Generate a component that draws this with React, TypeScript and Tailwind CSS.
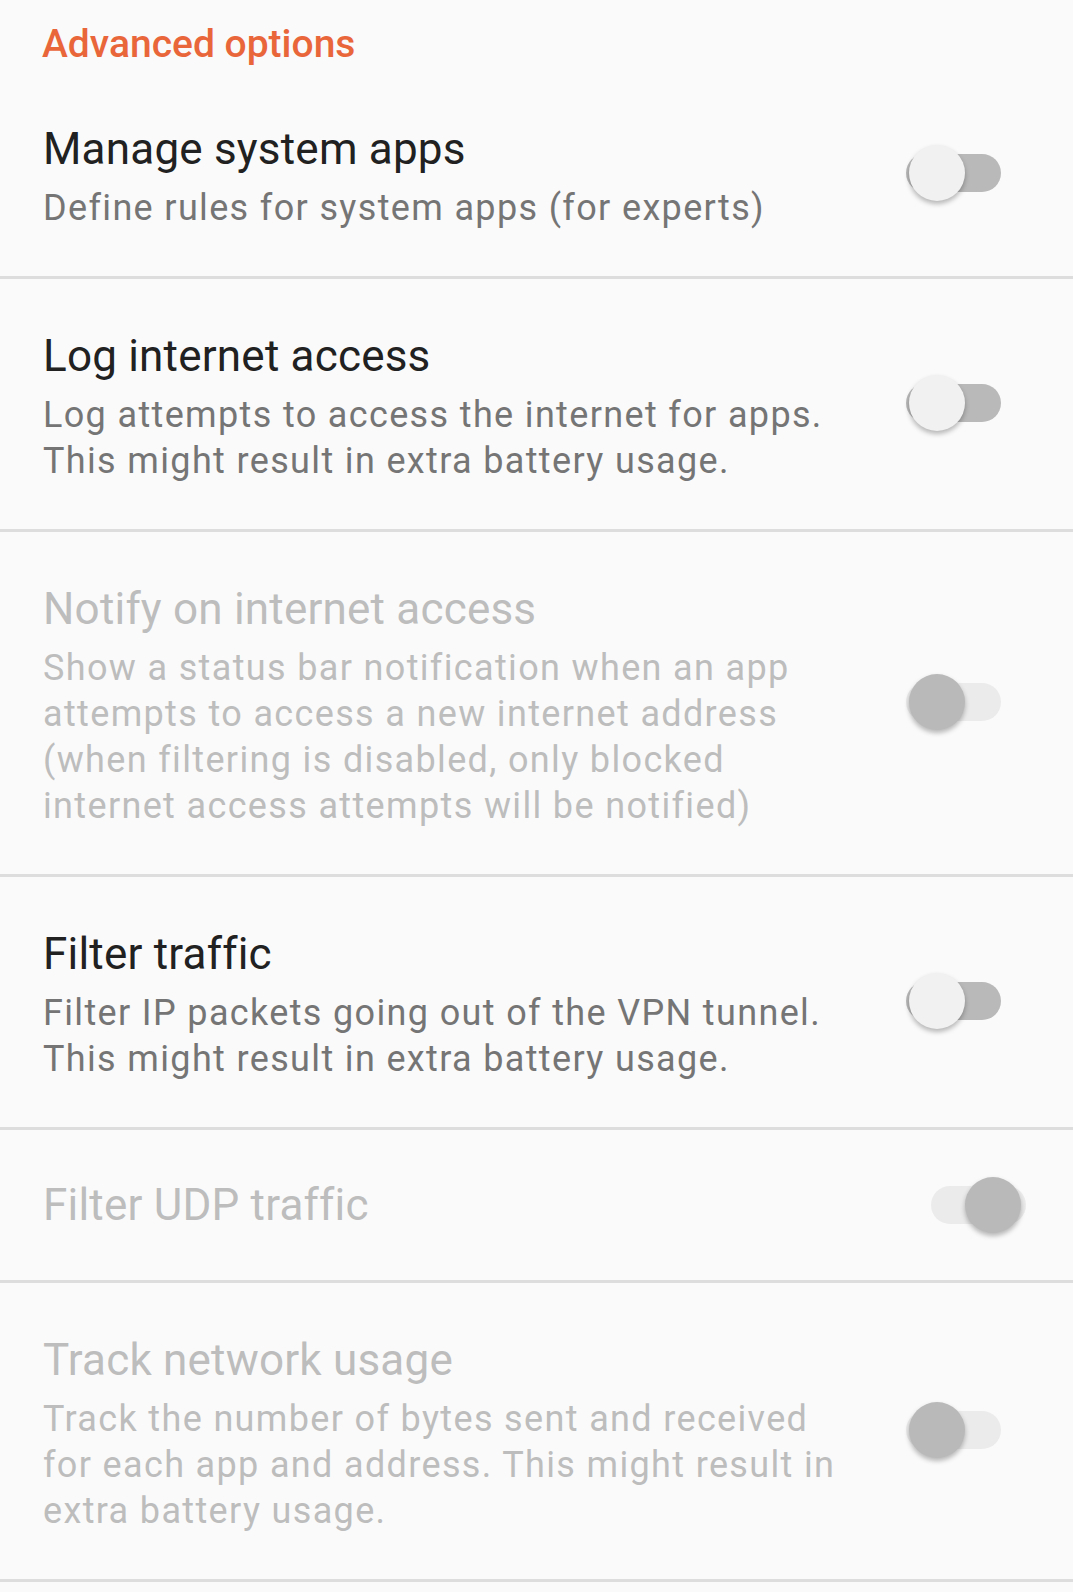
type Pref = {
  title: string
  summary?: string[]
  enabled: boolean
  checked: boolean
}

const prefs: Pref[] = [
  {
    title: 'Manage system apps',
    summary: ['Define rules for system apps (for experts)'],
    enabled: true,
    checked: false,
  },
  {
    title: 'Log internet access',
    summary: ['Log attempts to access the internet for apps.', 'This might result in extra battery usage.'],
    enabled: true,
    checked: false,
  },
  {
    title: 'Notify on internet access',
    summary: [
      'Show a status bar notification when an app',
      'attempts to access a new internet address',
      '(when filtering is disabled, only blocked',
      'internet access attempts will be notified)',
    ],
    enabled: false,
    checked: false,
  },
  {
    title: 'Filter traffic',
    summary: ['Filter IP packets going out of the VPN tunnel.', 'This might result in extra battery usage.'],
    enabled: true,
    checked: false,
  },
  {
    title: 'Filter UDP traffic',
    enabled: false,
    checked: true,
  },
  {
    title: 'Track network usage',
    summary: [
      'Track the number of bytes sent and received',
      'for each app and address. This might result in',
      'extra battery usage.',
    ],
    enabled: false,
    checked: false,
  },
]

function Switch({ enabled, checked, raised }: { enabled: boolean; checked: boolean; raised: boolean }) {
  const track = enabled ? 'bg-[#b9b9b9]' : 'bg-[#ebebeb]'
  const thumb = enabled ? 'bg-[#f1f1f1]' : 'bg-[#b9b9b9]'
  return (
    <div
      className={`relative h-[60px] w-[95px] shrink-0 ${checked ? 'mr-[47px]' : 'mr-[72px]'} ${
        raised ? 'mb-[8px]' : ''
      }`}
    >
      <div className={`absolute left-0 top-[11px] h-[38px] w-[95px] rounded-full ${track}`} />
      <div
        className={`absolute top-[2px] h-[56px] w-[56px] rounded-full shadow-[0_3px_5px_rgba(0,0,0,0.28)] ${thumb} ${
          checked ? 'right-[5px]' : 'left-[3px]'
        }`}
      />
    </div>
  )
}

function PrefRow({ pref }: { pref: Pref }) {
  const titleColor = pref.enabled ? 'text-[#212121]' : 'text-[#bdbdbd]'
  const summaryColor = pref.enabled ? 'text-[#757575]' : 'text-[#bdbdbd]'
  return (
    <div
      className={`flex items-center border-b-[3px] border-[#dddddd] pl-[43px] ${
        pref.summary ? 'pt-[51px] pb-[45px]' : 'py-[45px]'
      }`}
    >
      <div className="flex-1">
        <div className={`text-[44px] leading-[52px] tracking-[0.2px] ${titleColor}`}>{pref.title}</div>
        {pref.summary && (
          <div className={`mt-[10px] text-[36px] leading-[46px] tracking-[1.35px] ${summaryColor}`}>
            {pref.summary.map((line) => (
              <div key={line} className="whitespace-nowrap">
                {line}
              </div>
            ))}
          </div>
        )}
      </div>
      <Switch enabled={pref.enabled} checked={pref.checked} raised={!!pref.summary} />
    </div>
  )
}

export default function App() {
  return (
    <div className="min-h-[1592px] w-[1073px] bg-[#fafafa] font-['Roboto',sans-serif]">
      <div className="flex h-[72px] items-start pl-[42px] pt-[20px]">
        <h2 className="text-[39px] font-medium leading-[48px] text-[#e9663a]">Advanced options</h2>
      </div>
      {prefs.map((p) => (
        <PrefRow key={p.title} pref={p} />
      ))}
    </div>
  )
}
